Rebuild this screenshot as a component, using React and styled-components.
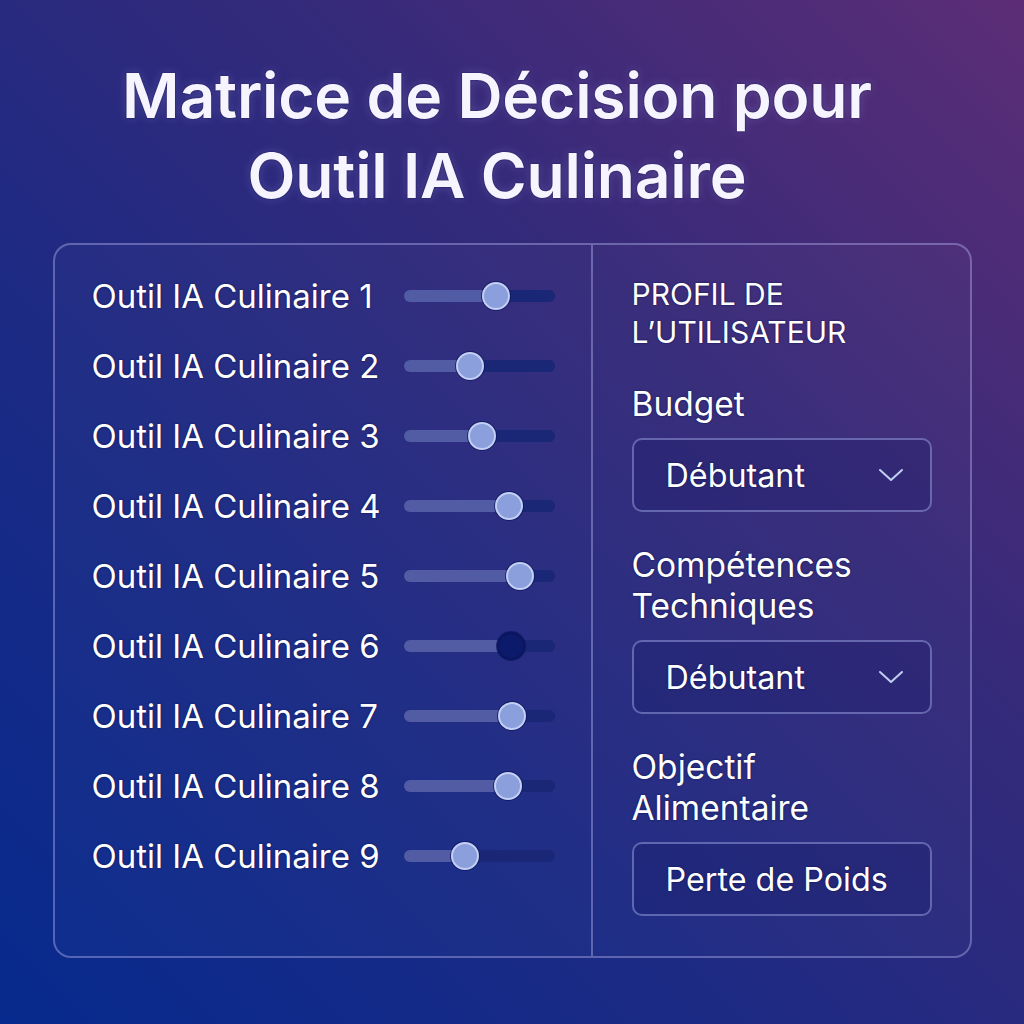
import React from "react";
import styled, { createGlobalStyle } from "styled-components";

const Global = createGlobalStyle`
  html, body { margin: 0; padding: 0; }
  body {
    width: 1024px;
    height: 1024px;
    overflow: hidden;
    font-family: Inter, "Noto Sans", "Liberation Sans", sans-serif;
    color: #ffffff;
    background: linear-gradient(45deg, #072a8e 0%, #1c2a84 35%, #352a7a 65%, #5c2d76 100%);
  }
`;

const Page = styled.div`
  width: 1024px;
  height: 1024px;
  display: flex;
  flex-direction: column;
  align-items: center;
  padding-top: 56px;
  box-sizing: border-box;
`;

const Title = styled.h1`
  margin: 0 30px 27px 0;
  font-size: 62.4px;
  line-height: 80px;
  font-weight: 600;
  text-align: center;
  letter-spacing: -0.2px;
  color: #f6f4ff;
  text-shadow: 0 0 2px rgba(10, 10, 60, 0.9), 0 0 10px rgba(180, 170, 255, 0.25);
`;

const Panel = styled.div`
  width: 919px;
  height: 715px;
  box-sizing: border-box;
  border: 2px solid rgba(170, 170, 230, 0.45);
  border-radius: 18px;
  display: grid;
  grid-template-columns: 538px 1fr;
  background: rgba(255, 255, 255, 0.02);
`;

const Left = styled.div`
  border-right: 2px solid rgba(170, 170, 230, 0.45);
  padding: 16px 0 0 37px;
  display: flex;
  flex-direction: column;
`;

const Row = styled.div`
  height: 70px;
  display: flex;
  align-items: center;
`;

const Label = styled.span`
  width: 312px;
  font-size: 33px;
  font-weight: 400;
  color: #ffffff;
  text-shadow: 0 0 2px rgba(5, 10, 70, 0.9);
  white-space: nowrap;
`;

const Track = styled.div`
  position: relative;
  width: 151px;
  height: 12px;
  border-radius: 6px;
  background: #1a2676;
`;

const Fill = styled.div`
  height: 100%;
  border-radius: 6px;
  background: rgba(150, 160, 225, 0.45);
`;

const Thumb = styled.div`
  position: absolute;
  top: 50%;
  width: 28px;
  height: 28px;
  border-radius: 50%;
  transform: translate(-50%, -50%);
  box-sizing: border-box;
  background: ${(p) => (p.$dark ? "#0c1a6c" : "#8b9fdd")};
  border: 2px solid ${(p) => (p.$dark ? "#0a1660" : "#c3cff4")};
  box-shadow: 0 0 0 1px rgba(10, 20, 90, 0.7);
`;

const Right = styled.div`
  padding: 30px 38px 0 39px;
  display: flex;
  flex-direction: column;
`;

const Heading = styled.div`
  font-size: 30px;
  line-height: 38px;
  font-weight: 400;
  text-transform: uppercase;
  text-shadow: 0 0 2px rgba(5, 10, 70, 0.9);
`;

const Section = styled.div`
  margin-top: 33px;
  display: flex;
  flex-direction: column;
  gap: 13px;
`;

const FieldLabel = styled.div`
  font-size: 33.5px;
  line-height: 41px;
  font-weight: 400;
  text-shadow: 0 0 2px rgba(5, 10, 70, 0.9);
`;

const Select = styled.div`
  height: 74px;
  box-sizing: border-box;
  border: 2px solid rgba(160, 165, 230, 0.5);
  border-radius: 10px;
  display: flex;
  align-items: center;
  justify-content: space-between;
  padding: 0 26px 0 32px;
  font-size: 32.3px;
  background: rgba(20, 25, 100, 0.25);
  text-shadow: 0 0 2px rgba(5, 10, 70, 0.9);
`;

const ChevronSvg = styled.svg`
  width: 26px;
  height: 14px;
  color: #c2cff2;
  flex: none;
`;

function Chevron() {
  return (
    <ChevronSvg viewBox="0 0 26 14" fill="none">
      <polyline
        points="2,2 13,12 24,2"
        stroke="currentColor"
        strokeWidth="2"
        strokeLinecap="round"
        strokeLinejoin="round"
      />
    </ChevronSvg>
  );
}

const tools = [0.61, 0.44, 0.52, 0.7, 0.77, 0.71, 0.72, 0.69, 0.41];

export default function App() {
  return (
    <>
      <Global />
      <Page>
        <Title>
          Matrice de Décision pour
          <br />
          Outil IA Culinaire
        </Title>
        <Panel>
          <Left>
            {tools.map((v, i) => (
              <Row key={i}>
                <Label>Outil IA Culinaire {i + 1}</Label>
                <Track>
                  <Fill style={{ width: `${v * 100}%` }} />
                  <Thumb $dark={i === 5} style={{ left: `${v * 100}%` }} />
                </Track>
              </Row>
            ))}
          </Left>
          <Right>
            <Heading>
              Profil de
              <br />
              L’utilisateur
            </Heading>
            <Section>
              <FieldLabel>Budget</FieldLabel>
              <Select>
                Débutant
                <Chevron />
              </Select>
            </Section>
            <Section>
              <FieldLabel>
                Compétences
                <br />
                Techniques
              </FieldLabel>
              <Select>
                Débutant
                <Chevron />
              </Select>
            </Section>
            <Section>
              <FieldLabel>
                Objectif
                <br />
                Alimentaire
              </FieldLabel>
              <Select>Perte de Poids</Select>
            </Section>
          </Right>
        </Panel>
      </Page>
    </>
  );
}
